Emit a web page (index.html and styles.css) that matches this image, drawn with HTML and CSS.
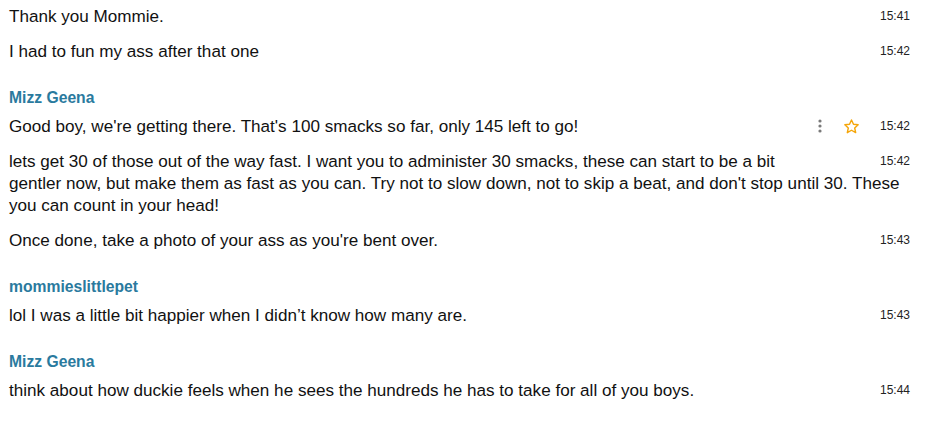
FILE: index.html
```html
<!DOCTYPE html>
<html>
<head>
<meta charset="utf-8">
<link rel="stylesheet" href="styles.css">
</head>
<body>
<div class="chat">
  <div class="msg"><div class="meta"><span class="time">15:41</span></div>Thank you Mommie.</div>
  <div class="msg"><div class="meta"><span class="time">15:42</span></div>I had to fun my ass after that one</div>

  <div class="name">Mizz Geena</div>
  <div class="msg"><div class="meta"><span class="actions"><svg class="kebab" width="4" height="14" viewBox="0 0 4 14"><circle cx="2" cy="2" r="1.6"/><circle cx="2" cy="7" r="1.6"/><circle cx="2" cy="12" r="1.6"/></svg><svg class="star" width="17" height="17" viewBox="0 0 24 24"><path d="M12 2.8l2.8 6.1 6.6.7-4.9 4.5 1.4 6.6L12 17.3l-5.9 3.4 1.4-6.6-4.9-4.5 6.6-.7z" fill="none" stroke="#f5a60a" stroke-width="2" stroke-linejoin="round"/></svg></span><span class="time">15:42</span></div>Good boy, we're getting there. That's 100 smacks so far, only 145 left to go!</div>
  <div class="msg"><div class="meta"><span class="time">15:42</span></div>lets get 30 of those out of the way fast. I want you to administer 30 smacks, these can start to be a bit gentler now, but make them as fast as you can. Try not to slow down, not to skip a beat, and don't stop until 30. These you can count in your head!</div>
  <div class="msg"><div class="meta"><span class="time">15:43</span></div>Once done, take a photo of your ass as you're bent over.</div>

  <div class="name">mommieslittlepet</div>
  <div class="msg"><div class="meta"><span class="time">15:43</span></div>lol I was a little bit happier when I didn’t know how many are.</div>

  <div class="name">Mizz Geena</div>
  <div class="msg"><div class="meta"><span class="time">15:44</span></div>think about how duckie feels when he sees the hundreds he has to take for all of you boys.</div>
</div>
</body>
</html>
```

FILE: styles.css
```css
html, body {
  margin: 0;
  padding: 0;
  background: #ffffff;
}
body {
  font-family: "Liberation Sans", Arial, sans-serif;
  color: #111111;
}
.chat {
  padding: 0 19px 0 9px;
}
.msg {
  font-size: 17.1px;
  line-height: 22px;
  padding: 6px 0 7px;
}
.meta {
  float: right;
  width: 120px;
  height: 22px;
  display: flex;
  justify-content: flex-end;
  align-items: center;
  margin-left: 6px;
}
.time {
  font-size: 12px;
  line-height: 14px;
  color: #222222;
  margin-top: -3px;
}
.actions {
  display: flex;
  align-items: center;
  margin-right: 20px;
  margin-top: -2px;
}
.kebab {
  fill: #7a7a7a;
  margin-right: 21px;
}
.name {
  font-size: 15.7px;
  font-weight: bold;
  color: #2a7a9e;
  line-height: 20px;
  padding: 18px 0 2px;
}
```
